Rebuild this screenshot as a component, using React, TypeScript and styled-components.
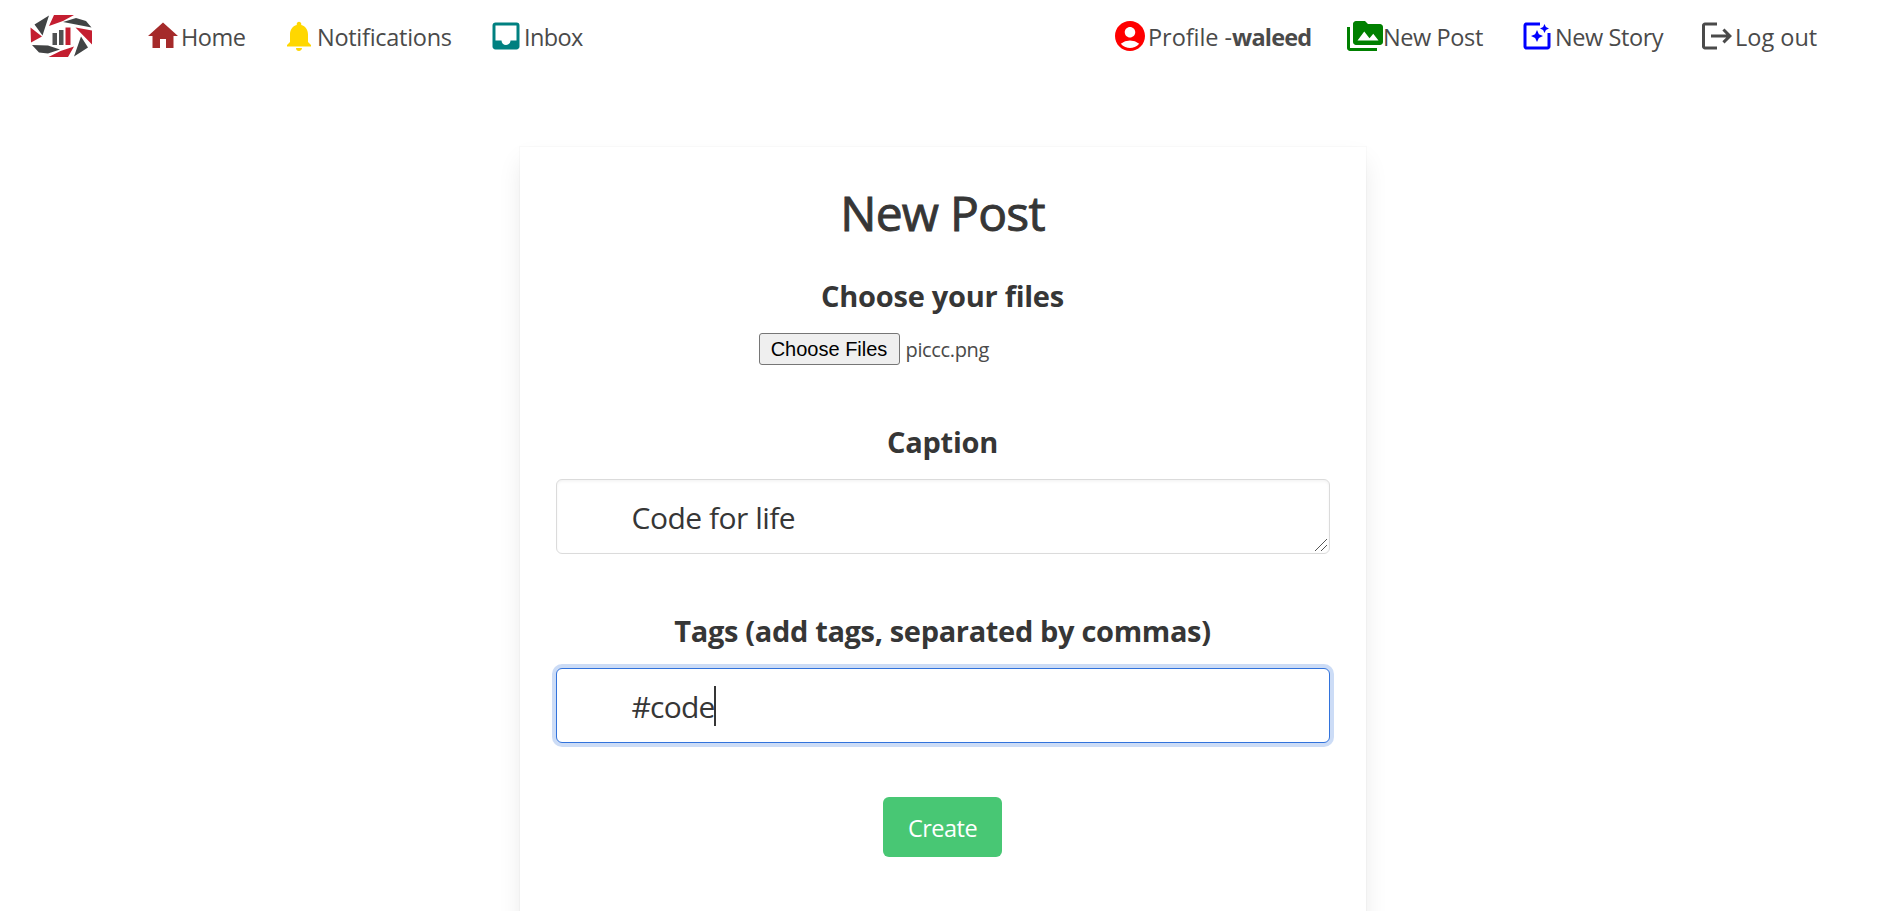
import React from 'react';
import styled, { createGlobalStyle } from 'styled-components';
import { MdHome, MdNotifications, MdInbox, MdAccountCircle, MdPermMedia } from 'react-icons/md';

const GlobalStyle = createGlobalStyle`
  * { box-sizing: border-box; }
  html { overflow: hidden; background: #fff; }
  body { margin: 0; height: 911px; overflow: hidden; color: #4a4a4a; font-family: 'Open Sans', sans-serif; font-size: 23.5px; }
`;

const Page = styled.div`
  display: flex;
  flex-direction: column;
  align-items: center;
  height: 911px;
  overflow: hidden;
`;

const Navbar = styled.nav`
  display: flex;
  width: 100%;
  height: 73px;
  padding: 0 66px 0 30px;
  flex-shrink: 0;
`;

const Logo = styled.svg`
  width: 64px;
  height: 44px;
  margin: 14px 51px 0 0;
`;

const NavGroup = styled.div<{ $end?: boolean }>`
  display: flex;
  align-items: flex-start;
  margin-left: ${(p) => (p.$end ? 'auto' : '0')};
`;

const NavItem = styled.a<{ $width: number; $color: string }>`
  display: flex;
  align-items: center;
  width: ${(p) => p.$width}px;
  height: 72px;
  svg { width: 36px; height: 36px; flex-shrink: 0; color: ${(p) => p.$color}; }
`;

const Text = styled.span<{ $spacing?: number }>`
  white-space: pre;
  padding-top: 1px;
  letter-spacing: ${(p) => p.$spacing ?? 0}px;
  strong { font-weight: 700; letter-spacing: -0.8px; }
`;

const Card = styled.main`
  display: flex;
  flex-direction: column;
  align-items: center;
  width: 846px;
  height: 900px;
  flex-shrink: 0;
  margin: 74px 0 0 2px;
  padding: 36px;
  color: #363636;
  box-shadow: 0 12px 24px -3px rgba(10, 10, 10, 0.1), 0 0 0 1px rgba(10, 10, 10, 0.02);
`;

const Title = styled.h1`
  margin: 0;
  font-size: 48px;
  line-height: 60px;
  font-weight: 500;
  letter-spacing: -0.75px;
  -webkit-text-stroke: 0.9px #363636;
`;

const Label = styled.label<{ $top: number; $spacing: number }>`
  margin-top: ${(p) => p.$top}px;
  font-size: 29px;
  line-height: 45px;
  font-weight: 700;
  letter-spacing: ${(p) => p.$spacing}px;
`;

const FileRow = styled.div`
  display: flex;
  align-items: center;
  width: 368px;
  height: 32px;
  margin-top: 15px;
  color: #4a4a4a;
  font-size: 20px;
  letter-spacing: -0.35px;
`;

const FileButton = styled.button`
  width: 141px;
  height: 32px;
  margin-right: 6px;
  padding: 0;
  border: 1px solid #767676;
  border-radius: 3px;
  background: #efefef;
  color: #000;
  font: 20px 'Liberation Sans', sans-serif;
`;

const Field = styled.div<{ $focused?: boolean }>`
  position: relative;
  display: flex;
  align-items: center;
  width: 774px;
  height: 75px;
  margin-top: 15px;
  padding-left: 75px;
  border: 1px solid ${(p) => (p.$focused ? '#3273dc' : '#dbdbdb')};
  border-radius: 6px;
  background: #fff;
  box-shadow: ${(p) => (p.$focused ? '0 0 0 4px rgba(50, 115, 220, 0.25)' : 'inset 0 1.5px 3px rgba(10, 10, 10, 0.05)')};
  font-size: 30px;
`;

const Grip = styled.svg`
  position: absolute;
  right: 2px;
  bottom: 2px;
  width: 12px;
  height: 12px;
`;

const Caret = styled.span`
  width: 2px;
  height: 40px;
  margin: 1px 0 0 -1px;
  background: #363636;
`;

const CreateButton = styled.button`
  width: 119px;
  height: 60px;
  margin-top: 54px;
  padding: 2px 0 0;
  border: 0;
  border-radius: 6px;
  background: #48c774;
  color: #fff;
  font: inherit;
  font-size: 23.5px;
  letter-spacing: -0.5px;
`;

const StoryIcon = () => (
  <svg viewBox="0 0 24 24" fill="currentColor">
    <path d="M19 19H5V5h9V3H5c-1.1 0-2 .9-2 2v14c0 1.1.9 2 2 2h14c1.1 0 2-.9 2-2V10h-2z" />
    <path d="m12 8-1.25 2.75L8 12l2.75 1.25L12 16l1.25-2.75L16 12l-2.75-1.25zM17 4l-.94 2.06L14 7l2.06.94L17 10l.94-2.06L20 7l-2.06-.94z" />
  </svg>
);

const LogoutIcon = () => (
  <svg viewBox="0 0 24 24" fill="currentColor">
    <path d="m17 7-1.41 1.41L18.17 11H8v2h10.17l-2.58 2.58L17 17l5-5zM4 5h8V3H4c-1.1 0-2 .9-2 2v14c0 1.1.9 2 2 2h8v-2H4z" />
  </svg>
);

export default function App() {
  return (
    <Page>
      <GlobalStyle />
      <Navbar>
        <Logo viewBox="30 14 64 44">
          <path fill="#c41e30" d="M54 15h20l-11 6-14 5zM75.500 27.500l16.500 3v14zM30.500 27.500l11.500 9-11 6zM74 46.500l-6 10.500H48.500l12-6z" />
          <path fill="#414344" d="M49 15.500l-6.500 20-8-11zM63 22l13-4 10 3 5.500 6.500zM81 36.500l7 11L74 56.500zM32 45l16 .5 12 4-12 4-9-1z" />
          <path fill="#505152" d="M52.500 33h4.500v12h-4.500zM59 30h4.500v15H59z" />
          <path fill="#c41e30" d="M65.500 27.500h5V45h-5z" />
        </Logo>
        <NavGroup>
          <NavItem $width={136} $color="brown"><MdHome /><Text $spacing={-0.5}>Home</Text></NavItem>
          <NavItem $width={207} $color="gold"><MdNotifications /><Text $spacing={-0.28}>Notifications</Text></NavItem>
          <NavItem $width={120} $color="teal"><MdInbox /><Text $spacing={-0.6}>Inbox</Text></NavItem>
        </NavGroup>
        <NavGroup $end>
          <NavItem $width={235} $color="red"><MdAccountCircle /><Text $spacing={-0.05}>Profile -<strong>waleed</strong></Text></NavItem>
          <NavItem $width={172} $color="green"><MdPermMedia /><Text $spacing={-0.4}>New Post</Text></NavItem>
          <NavItem $width={180} $color="blue"><StoryIcon /><Text $spacing={-0.42}>New Story</Text></NavItem>
          <NavItem $width={118} $color="#4a4a4a"><LogoutIcon /><Text>Log out</Text></NavItem>
        </NavGroup>
      </Navbar>
      <Card>
        <Title>New Post</Title>
        <Label $top={30} $spacing={-0.26}>Choose your files</Label>
        <FileRow><FileButton>Choose Files</FileButton>piccc.png</FileRow>
        <Label $top={54} $spacing={-0.28}>Caption</Label>
        <Field>
          <Text $spacing={-0.5}>Code for life</Text>
          <Grip viewBox="0 0 12 12" stroke="#555" fill="none"><path d="M0 12 12 0M6 12l6-6" /></Grip>
        </Field>
        <Label $top={54} $spacing={-0.34}>Tags (add tags, separated by commas)</Label>
        <Field $focused><Text $spacing={-0.8}>#code</Text><Caret /></Field>
        <CreateButton>Create</CreateButton>
      </Card>
    </Page>
  );
}
